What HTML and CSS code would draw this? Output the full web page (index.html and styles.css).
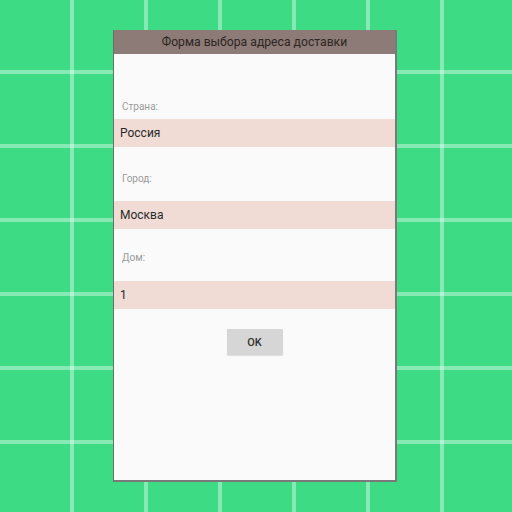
FILE: index.html
```html
<!DOCTYPE html>
<html lang="ru">
<head>
<meta charset="utf-8">
<link rel="stylesheet" href="styles.css">
</head>
<body>
<div class="panel">
  <div class="header">Форма выбора адреса доставки</div>
  <div class="form">
    <div class="label label-first">Страна:</div>
    <div class="field">Россия</div>
    <div class="label label-city">Город:</div>
    <div class="field">Москва</div>
    <div class="label label-house">Дом:</div>
    <div class="field">1</div>
    <div class="actions"><button class="btn">OK</button></div>
  </div>
</div>
</body>
</html>
```

FILE: styles.css
```css
html, body {
  margin: 0;
  padding: 0;
}
body {
  width: 512px;
  height: 512px;
  overflow: hidden;
  font-family: Roboto, "Noto Sans", sans-serif;
  background-color: #3ddc84;
  background-image:
    linear-gradient(90deg, transparent 70px, rgba(255,255,255,0.38) 70px, rgba(255,255,255,0.38) 75px, transparent 75px),
    linear-gradient(180deg, transparent 70px, rgba(255,255,255,0.38) 70px, rgba(255,255,255,0.38) 75px, transparent 75px);
  background-size: 74px 74px;
  background-position: 0 0;
  padding-top: 30px;
  box-sizing: border-box;
}
.panel {
  margin-left: 113px;
  width: 284px;
  height: 452px;
  box-sizing: border-box;
  background: #fafafa;
  border-left: 1px solid #6e6e6e;
  border-right: 2px solid #7a7a7a;
  border-bottom: 2px solid #7a7a7a;
  display: flex;
  flex-direction: column;
}
.header {
  height: 24px;
  background: #8c7b76;
  color: #2e2624;
  font-size: 12.2px;
  line-height: 24px;
  text-align: center;
}
.form {
  display: flex;
  flex-direction: column;
}
.label {
  font-size: 10px;
  line-height: 12px;
  color: #9a9a9a;
  padding-left: 8px;
}
.label-first { margin-top: 47px; margin-bottom: 6px; }
.label-city { margin-top: 26px; margin-bottom: 16px; }
.label-house { margin-top: 23px; margin-bottom: 17px; }
.field {
  height: 28px;
  line-height: 28px;
  background: #f0dcd5;
  color: #2a2a2a;
  font-size: 12px;
  padding-left: 6px;
}
.actions {
  display: flex;
  justify-content: center;
  margin-top: 20px;
}
.btn {
  width: 56px;
  height: 26px;
  border: none;
  border-radius: 1px;
  background: #d6d6d6;
  color: #333;
  font-family: Roboto, sans-serif;
  font-weight: 500;
  font-size: 11px;
  padding: 0;
  box-shadow: 0 1px 1px rgba(0,0,0,0.12);
}
```
